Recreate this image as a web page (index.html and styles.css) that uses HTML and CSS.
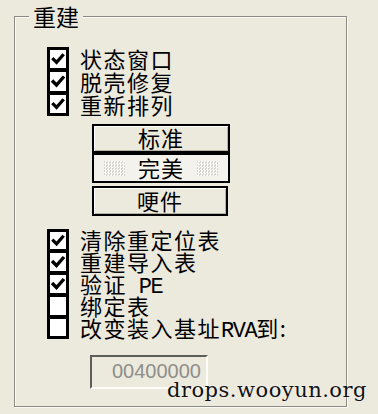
FILE: index.html
```html
<!DOCTYPE html>
<html lang="zh-CN">
<head>
<meta charset="utf-8">
<title>重建</title>
<link rel="stylesheet" href="styles.css">
</head>
<body>
<fieldset class="group">
  <legend class="group-title">重建</legend>
  <div class="checks checks-a">
    <div class="check-row"><span class="box"><svg class="tick" viewBox="0 0 16 19"><polyline points="2,8.5 6.5,13 14,4.5"/></svg></span><span class="label">状态窗口</span></div>
    <div class="check-row"><span class="box"><svg class="tick" viewBox="0 0 16 19"><polyline points="2,8.5 6.5,13 14,4.5"/></svg></span><span class="label">脱壳修复</span></div>
    <div class="check-row"><span class="box"><svg class="tick" viewBox="0 0 16 19"><polyline points="2,8.5 6.5,13 14,4.5"/></svg></span><span class="label">重新排列</span></div>
  </div>
  <div class="modes">
    <div class="mode-btn">标准</div>
    <div class="mode-btn pressed"><span class="dither"></span><span class="mode-text">完美</span><span class="dither"></span></div>
    <div class="mode-btn narrow">哽件</div>
  </div>
  <div class="checks checks-b">
    <div class="check-row"><span class="box"><svg class="tick" viewBox="0 0 16 18"><polyline points="2,8 6.5,12.5 14,4"/></svg></span><span class="label">清除重定位表</span></div>
    <div class="check-row"><span class="box"><svg class="tick" viewBox="0 0 16 18"><polyline points="2,8 6.5,12.5 14,4"/></svg></span><span class="label">重建导入表</span></div>
    <div class="check-row"><span class="box"><svg class="tick" viewBox="0 0 16 18"><polyline points="2,8 6.5,12.5 14,4"/></svg></span><span class="label">验证<span class="latin"> PE</span></span></div>
    <div class="check-row"><span class="box"></span><span class="label">绑定表</span></div>
    <div class="check-row"><span class="box"></span><span class="label">改变装入基址<span class="latin">RVA</span>到:</span></div>
  </div>
  <div class="base-input">00400000</div>
</fieldset>
<div class="watermark">drops.wooyun.org</div>
</body>
</html>
```

FILE: styles.css
```css
html, body {
  margin: 0;
  padding: 0;
  background: #ece9dd;
}
body {
  padding: 5px 0 0 14px;
  height: 414px;
  box-sizing: border-box;
  overflow: hidden;
  font-family: "Noto Sans CJK SC", sans-serif;
  color: #000;
  position: relative;
}
.group {
  margin: 0;
  padding: 0 0 17px 0;
  width: 333px;
  box-sizing: border-box;
  border: 1px solid #8d8c84;
  box-shadow: 1px 1px 0 #fbfaf6, inset 1px 1px 0 #fbfaf6;
  min-inline-size: 0;
}
.group-title {
  margin-left: 14px;
  padding: 0 4px;
  font-size: 23px;
  line-height: 22px;
  background: #ece9dd;
}
.checks {
  display: flex;
  flex-direction: column;
  margin-left: 32px;
}
.checks-a { margin-top: 20px; }
.checks-b { margin-top: 13px; }
.check-row {
  display: flex;
  align-items: stretch;
  height: 23px;
}
.checks-b .check-row { height: 22px; }
.box {
  width: 22px;
  flex: none;
  box-sizing: border-box;
  background: #fff;
  border-style: solid;
  border-color: #000;
  border-width: 2px 3px;
  display: flex;
  align-items: center;
  justify-content: center;
}
.check-row:first-child .box { border-top-width: 3px; }
.check-row:last-child .box { border-bottom-width: 3px; }
.tick {
  width: 16px;
  height: 100%;
  display: block;
}
.tick polyline {
  fill: none;
  stroke: #000;
  stroke-width: 3.4;
  stroke-linejoin: miter;
  stroke-linecap: butt;
}
.label {
  margin-left: 11px;
  font-size: 22px;
  line-height: 22px;
  letter-spacing: 1.5px;
  white-space: pre;
}
.checks-b .label { line-height: 21px; }
.latin {
  font-family: "Liberation Mono", monospace;
  font-size: 22px;
  letter-spacing: -1.5px;
}
.modes {
  display: flex;
  flex-direction: column;
  align-items: flex-start;
  margin: 8px 0 0 77px;
}
.mode-btn {
  width: 138px;
  height: 29px;
  box-sizing: border-box;
  border: 2px solid #000;
  background: #ece9dd;
  box-shadow: inset 1px 1px 0 #fff, inset -1px -1px 0 #b5b2a6;
  font-size: 22px;
  line-height: 23px;
  letter-spacing: 1px;
  display: flex;
  align-items: center;
  justify-content: center;
  padding-bottom: 2px;
}
.mode-btn.pressed {
  height: 30px;
  background: #f4f2ec;
  box-shadow: none;
  gap: 13px;
}
.mode-btn.narrow {
  width: 136px;
  height: 30px;
  margin-top: 3px;
}
.dither {
  width: 21px;
  height: 15px;
  margin-top: 2px;
  background: repeating-conic-gradient(#ffffff 0 25%, #cfccc2 0 50%) 0 0 / 3px 3px;
  opacity: 0.8;
}
.base-input {
  margin: 16px 0 0 75px;
  width: 118px;
  height: 34px;
  box-sizing: border-box;
  border-style: solid;
  border-width: 2px;
  border-color: #5e5e5a #fdfcf8 #fdfcf8 #5e5e5a;
  background: #ece9dd;
  color: #8e8e8a;
  font-family: "Liberation Sans", sans-serif;
  font-size: 20px;
  line-height: 28px;
  padding-left: 20px;
}
.watermark {
  position: absolute;
  left: 167px;
  top: 378px;
  font-family: "DejaVu Serif", serif;
  font-size: 21px;
  line-height: 24px;
  letter-spacing: 0.5px;
  color: #111;
  text-shadow: 0 0 2px rgba(255,255,255,0.9);
}
```
